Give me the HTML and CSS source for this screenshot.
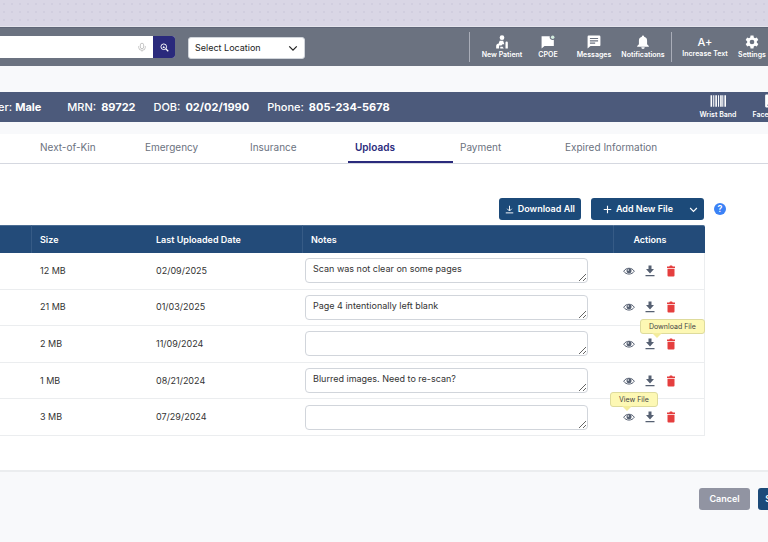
FILE: index.html
```html
<!DOCTYPE html>
<html lang="en">

<head>
    <meta charset="UTF-8">
    <meta name="viewport" content="width=device-width, initial-scale=1.0">
    <title>Patient Uploads</title>
    <link rel="stylesheet" href="styles.css">
</head>

<body>
    <!-- Shared icons -->
    <svg class="sprite" aria-hidden="true">
        <symbol id="eye" viewBox="0 0 24 24">
            <path d="M1.5 12.5C6 4.5 18 4.5 22.5 12.5C18 20 6 20 1.5 12.5Z" fill="none" stroke="currentColor" stroke-width="2" />
            <circle cx="12" cy="11.5" r="5" fill="currentColor" />
            <circle cx="10.500" cy="10" r="1.500" fill="#fff" />
        </symbol>
        <symbol id="download" viewBox="0 0 24 24">
            <path d="M9 1h6v7h5l-8 9-8-9h5zM3 20h18v2.500H3z" fill="currentColor" />
        </symbol>
        <symbol id="trash" viewBox="0 0 24 24">
            <path d="M4 3h4.500l1.500-2h4l1.500 2H20v3H4zM5 7.500h14V21a2 2 0 0 1-2 2H7a2 2 0 0 1-2-2z" fill="currentColor" />
        </symbol>
        <symbol id="chevron" viewBox="0 0 24 24">
            <path d="M3 8l9 9 9-9" fill="none" stroke="currentColor" stroke-width="3" />
        </symbol>
    </svg>

    <div class="backdrop"></div>

    <header class="topbar">
        <form class="search">
            <input type="text" aria-label="Search">
            <svg class="mic" viewBox="0 0 24 24"><path d="M12 3a4 4 0 0 0-4 4v5a4 4 0 0 0 8 0V7a4 4 0 0 0-4-4zM4 10v3a8 7 0 0 0 16 0v-3M12 20v3" fill="none" stroke="currentColor" stroke-width="2" /></svg>
            <button type="button" aria-label="Search"><svg viewBox="0 0 24 24"><circle cx="10" cy="10" r="7.500" fill="none" stroke="currentColor" stroke-width="2.500" /><path d="M15 15l7 7" stroke="currentColor" stroke-width="3.500" /><circle cx="10" cy="8.500" r="1.500" fill="currentColor" /><path d="M7 13c0-3 6-3 6 0z" fill="currentColor" /></svg></button>
        </form>
        <div class="location">
            <select aria-label="Location">
                <option>Select Location</option>
            </select>
            <svg viewBox="0 0 24 24"><use href="#chevron" /></svg>
        </div>
        <nav class="tools">
            <button type="button" class="tool new-patient">
                <svg viewBox="0 0 24 24"><circle cx="12" cy="4.500" r="4" fill="currentColor" /><path d="M2 23v-4c0-3 2-4 4-4l2-5h6l2 6h-3l-2 2H7v5zM9 23v-3h4l2 3zM18 13a2 2 0 0 1 4 0v10h-4z" fill="currentColor" /></svg>
                New Patient
            </button>
            <button type="button" class="tool cpoe">
                <svg viewBox="0 0 24 24"><path d="M1 2h14a5 5 0 0 0 7 6v11H6l-5 4z" fill="currentColor" /><circle cx="20" cy="4" r="3" fill="#d3ecdf" /></svg>
                CPOE
            </button>
            <button type="button" class="tool messages">
                <svg viewBox="0 0 24 24"><path d="M3 1h18a2 2 0 0 1 2 2v14a2 2 0 0 1-2 2H6l-5 4V3a2 2 0 0 1 2-2z" fill="currentColor" /><path d="M5 6h14M5 10h14M5 14h9" stroke="#6b7280" stroke-width="2" /></svg>
                Messages
            </button>
            <button type="button" class="tool notifications">
                <svg viewBox="0 0 24 24"><path d="M12 1a2 2 0 0 1 2 2c4 1 5 4 5 7v6l3 3v1H2v-1l3-3v-6c0-3 1-6 5-7a2 2 0 0 1 2-2zM9 21h6a3 3 0 0 1-6 0z" fill="currentColor" /></svg>
                Notifications
            </button>
        </nav>
        <nav class="tools">
            <button type="button" class="tool increase">
                <span class="letter">A+</span>
                Increase Text
            </button>
            <button type="button" class="tool settings">
                <svg viewBox="0 0 24 24"><path fill-rule="evenodd" d="M9.500 1h5l.6 3.300 2.100 1.200 3.100-1.200 2.500 4.300-2.500 2.200v2.400l2.500 2.200-2.500 4.300-3.100-1.200-2.100 1.200-.6 3.300h-5l-.6-3.300-2.100-1.200-3.100 1.200-2.500-4.300 2.500-2.200v-2.400L1.200 8.600l2.500-4.300 3.100 1.200 2.100-1.200zM12 8a4 4 0 1 0 0 8 4 4 0 0 0 0-8z" fill="currentColor" /></svg>
                Settings
            </button>
        </nav>
    </header>

    <section class="patient">
        <dl class="facts">
            <div class="gender"><dt>Gender:</dt><dd>Male</dd></div>
            <div><dt>MRN:</dt><dd>89722</dd></div>
            <div><dt>DOB:</dt><dd>02/02/1990</dd></div>
            <div><dt>Phone:</dt><dd>805-234-5678</dd></div>
        </dl>
        <div class="prints">
            <button type="button" class="tool">
                <svg viewBox="0 0 30 24"><path d="M1 1h3v22H1zM6 1h2v22H6zM10 1h3v22h-3zM15 1h2v22h-2zM19 1h3v22h-3zM23 1h2v22h-2zM27 1h3v22h-3z" fill="currentColor" /></svg>
                Wrist Band
            </button>
            <button type="button" class="tool">
                <svg viewBox="0 0 30 24"><path fill-rule="evenodd" d="M6 0h18a2 2 0 0 1 2 2v20a2 2 0 0 1-2 2H6a2 2 0 0 1-2-2V2a2 2 0 0 1 2-2zM15 6a4 4 0 1 0 0 8 4 4 0 0 0 0-8zM8 21h14c0-6-14-6-14 0z" fill="currentColor" /></svg>
                Face Sheet
            </button>
        </div>
    </section>

    <main class="panel">
        <nav class="tabs">
            <a href="#">Next-of-Kin</a>
            <a href="#">Emergency</a>
            <a href="#">Insurance</a>
            <a href="#" class="active" aria-current="page">Uploads</a>
            <a href="#">Payment</a>
            <a href="#">Expired Information</a>
        </nav>

        <div class="actions-bar">
            <button type="button" class="btn">
                <svg viewBox="0 0 24 24"><path d="M12 2v13M6 10l6 6 6-6M2 21h20" fill="none" stroke="currentColor" stroke-width="2.500" /></svg>
                Download All
            </button>
            <button type="button" class="btn add">
                <svg viewBox="0 0 24 24"><path d="M12 2v20M2 12h20" stroke="currentColor" stroke-width="3" /></svg>
                Add New File
                <svg class="more" viewBox="0 0 24 24"><use href="#chevron" /></svg>
            </button>
            <button type="button" class="help" aria-label="Help">?</button>
        </div>

        <table class="files">
            <colgroup>
                <col class="col-edge">
                <col class="col-size">
                <col class="col-date">
                <col>
                <col class="col-actions">
            </colgroup>
            <thead>
                <tr>
                    <th></th>
                    <th class="split">Size</th>
                    <th>Last Uploaded Date</th>
                    <th class="split">Notes</th>
                    <th class="split center">Actions</th>
                </tr>
            </thead>
            <tbody>
                <tr>
                    <td></td>
                    <td>12 MB</td>
                    <td>02/09/2025</td>
                    <td class="note"><textarea aria-label="Notes">Scan was not clear on some pages</textarea></td>
                    <td class="row-actions">
                        <div>
                            <button type="button" aria-label="View"><svg><use href="#eye" /></svg></button>
                            <button type="button" aria-label="Download"><svg><use href="#download" /></svg></button>
                            <button type="button" class="delete" aria-label="Delete"><svg><use href="#trash" /></svg></button>
                        </div>
                    </td>
                </tr>
                <tr>
                    <td></td>
                    <td>21 MB</td>
                    <td>01/03/2025</td>
                    <td class="note"><textarea aria-label="Notes">Page 4 intentionally left blank</textarea></td>
                    <td class="row-actions">
                        <div>
                            <button type="button" aria-label="View"><svg><use href="#eye" /></svg></button>
                            <button type="button" aria-label="Download"><svg><use href="#download" /></svg></button>
                            <button type="button" class="delete" aria-label="Delete"><svg><use href="#trash" /></svg></button>
                        </div>
                    </td>
                </tr>
                <tr>
                    <td></td>
                    <td>2 MB</td>
                    <td>11/09/2024</td>
                    <td class="note"><textarea aria-label="Notes"></textarea></td>
                    <td class="row-actions">
                        <div>
                            <button type="button" aria-label="View"><svg><use href="#eye" /></svg></button>
                            <button type="button" aria-label="Download"><svg><use href="#download" /></svg><span class="tip tip-download">Download File</span></button>
                            <button type="button" class="delete" aria-label="Delete"><svg><use href="#trash" /></svg></button>
                        </div>
                    </td>
                </tr>
                <tr>
                    <td></td>
                    <td>1 MB</td>
                    <td>08/21/2024</td>
                    <td class="note"><textarea aria-label="Notes">Blurred images. Need to re-scan?</textarea></td>
                    <td class="row-actions">
                        <div>
                            <button type="button" aria-label="View"><svg><use href="#eye" /></svg></button>
                            <button type="button" aria-label="Download"><svg><use href="#download" /></svg></button>
                            <button type="button" class="delete" aria-label="Delete"><svg><use href="#trash" /></svg></button>
                        </div>
                    </td>
                </tr>
                <tr>
                    <td></td>
                    <td>3 MB</td>
                    <td>07/29/2024</td>
                    <td class="note"><textarea aria-label="Notes"></textarea></td>
                    <td class="row-actions">
                        <div>
                            <button type="button" aria-label="View"><svg><use href="#eye" /></svg><span class="tip tip-view">View File</span></button>
                            <button type="button" aria-label="Download"><svg><use href="#download" /></svg></button>
                            <button type="button" class="delete" aria-label="Delete"><svg><use href="#trash" /></svg></button>
                        </div>
                    </td>
                </tr>
            </tbody>
        </table>
    </main>

    <footer class="form-actions">
        <button type="button" class="btn cancel">Cancel</button>
        <button type="button" class="btn save">Save</button>
    </footer>
</body>

</html>
```
FILE: styles.css
```css
* {
    box-sizing: border-box;
}

body {
    margin: 0;
    min-height: 100vh;
    overflow: hidden;
    background-color: #f8f9fb;
    color: #333;
    font-family: Inter, "Liberation Sans", sans-serif;
    font-size: 9px;
    line-height: 12px;
}

button,
select,
input,
textarea {
    font: inherit;
    color: inherit;
}

button {
    border: none;
    padding: 0;
    background: none;
    cursor: pointer;
}

svg {
    display: block;
    width: 12px;
    height: 12px;
}

.sprite {
    position: absolute;
    width: 0;
    height: 0;
}

.backdrop {
    height: 27px;
    background-color: #d9d6e5;
    background-image: radial-gradient(circle, #d1cedf 1px, transparent 1px);
    background-size: 8px 8px;
    border-bottom: 1px solid #e4e4ec;
}

/* Top bar */
.topbar {
    display: flex;
    align-items: center;
    height: 39px;
    background-color: #6b7280;
    border-top: 1px solid #5f6577;
    color: white;
}

.search {
    display: flex;
    align-items: center;
    flex: 0 1 175px;
    min-width: 0;
    height: 22px;
    background-color: white;
    border-radius: 0 3px 3px 0;
}

.search input {
    flex: 1;
    min-width: 0;
    height: 22px;
    border: none;
    background: none;
    color: #333;
}

.search .mic {
    width: 10px;
    height: 10px;
    margin-right: 6px;
    color: #bbb;
}

.search button {
    display: grid;
    place-items: center;
    width: 22px;
    height: 22px;
    background-color: #2a2a7c;
    border-radius: 0 3px 3px 0;
}

.search button svg {
    width: 9px;
    height: 9px;
}

.location {
    display: grid;
    align-items: center;
    width: 117px;
    margin: 2px auto 0 13px;
    color: #222;
}

.location select,
.location svg {
    grid-area: 1 / 1;
}

.location select {
    appearance: none;
    width: 100%;
    height: 22px;
    padding: 0 6px;
    border: 1px solid #d1d5db;
    border-radius: 3px;
    background-color: white;
}

.location svg {
    width: 10px;
    height: 10px;
    justify-self: end;
    margin-right: 7px;
    pointer-events: none;
}

.tools {
    display: flex;
    align-items: center;
    height: 30px;
    border-left: 1px solid #a9adb8;
}

.tool {
    display: flex;
    flex-direction: column;
    align-items: center;
    gap: 1px;
    color: white;
    font-size: 7px;
    font-weight: 600;
    line-height: 10px;
    white-space: nowrap;
}

.tool svg {
    width: 14px;
    height: 14px;
}

.new-patient {
    width: 64px;
}

.cpoe {
    width: 28px;
}

.messages {
    width: 64px;
}

.notifications {
    width: 34px;
    margin-right: 11px;
}

.increase {
    width: 66px;
    gap: 0;
}

.settings {
    width: 28px;
    margin-right: 2px;
}

.increase .letter {
    font-size: 11px;
    font-weight: 500;
    line-height: 13px;
}

/* Patient banner */
.patient {
    display: flex;
    justify-content: space-between;
    height: 30px;
    margin-top: 26px;
    background-color: #4c5a7b;
    color: white;
}

.facts {
    display: flex;
    align-items: center;
    gap: 18px;
    margin: 0 0 0 -30px;
    font-size: 11px;
    font-weight: 500;
}

.facts div {
    display: flex;
    gap: 5px;
}

.facts .gender {
    gap: 3px;
    margin-right: 8px;
}

.facts dd {
    margin: 0;
    font-weight: 700;
}

.prints {
    display: flex;
    align-items: center;
    gap: 16px;
    margin-right: -22px;
}

.prints .tool {
    gap: 2px;
}

.prints svg {
    width: 16px;
}

/* Uploads panel */
.panel {
    margin-top: 12px;
    padding-bottom: 34px;
    background-color: white;
    border-bottom: 2px solid #ebedef;
}

.tabs {
    display: flex;
    height: 30px;
    padding-left: 33px;
    border-bottom: 1px solid #d5d8e0;
    color: #6b7280;
    font-size: 10px;
}

.tabs a {
    flex: 0 0 105px;
    height: 29px;
    padding: 7px;
    border-bottom: 2px solid transparent;
    color: inherit;
    text-decoration: none;
    white-space: nowrap;
}

.tabs .active {
    border-color: #2a2a7c;
    color: #2a2a7c;
    font-weight: 600;
}

.actions-bar {
    display: flex;
    justify-content: flex-end;
    align-items: center;
    gap: 10px;
    margin: 34px 42px 5px 0;
}

.btn {
    display: flex;
    align-items: center;
    justify-content: center;
    gap: 4px;
    height: 22px;
    padding: 0 6px;
    border-radius: 3px;
    background-color: #1c4a79;
    color: white;
    font-weight: 600;
    white-space: nowrap;
}

.btn svg {
    width: 9px;
    height: 9px;
}

.add {
    padding-left: 12px;
}

.add .more {
    margin-left: 12px;
}

.help {
    width: 12px;
    height: 12px;
    border-radius: 50%;
    background-color: #3b82f6;
    color: white;
    font-weight: 600;
}

/* Files table */
.files {
    table-layout: fixed;
    width: calc(100% - 63px);
    height: 211px;
    border-spacing: 0;
}

.col-edge {
    width: 31px;
}

.col-size {
    width: 116px;
}

.col-date {
    width: 155px;
}

.col-actions {
    width: 92px;
}

.files th {
    height: 28px;
    padding: 0 9px;
    background-color: #234b79;
    border-top: 1px solid #4b6d93;
    color: white;
    font-weight: 600;
    text-align: left;
}

.files .split {
    padding-left: 8px;
    border-left: 1px solid #365b86;
}

.files th:last-child {
    border-radius: 0 2px 0 0;
}

.files .center {
    padding-right: 27px;
    text-align: center;
}

.files td {
    padding: 0 9px;
    border-bottom: 1px solid #ebedef;
}

.files td:last-child {
    border-right: 1px solid #ebedef;
}

.files .note {
    padding: 0 25px 0 3px;
}

.note textarea {
    display: block;
    width: 100%;
    height: 25px;
    padding: 4px 7px;
    border: 1px solid #d1d5db;
    border-radius: 4px;
    background-color: white;
    overflow: hidden;
    resize: both;
}

.files .row-actions {
    padding: 0 0 0 10px;
}

.row-actions div {
    display: flex;
    gap: 9px;
    color: #566072;
}

.row-actions button {
    position: relative;
}

.row-actions .delete {
    color: #e53e3e;
}

.tip {
    position: absolute;
    bottom: 16px;
    padding: 0 8px;
    border: 1px solid #dedb9c;
    border-radius: 3px;
    background-color: #fdf8b4;
    color: #444;
    font-size: 7px;
    line-height: 13px;
    white-space: nowrap;
}

.tip::after {
    content: "";
    position: absolute;
    top: 100%;
    left: 11px;
    border: 5px solid transparent;
    border-top-color: #f3ec9c;
    border-bottom: none;
}

.tip-download {
    left: -4px;
}

.tip-view {
    left: -13px;
}

/* Footer */
.form-actions {
    display: flex;
    justify-content: flex-end;
    gap: 8px;
    margin: 16px -26px 0 0;
}

.cancel {
    width: 51px;
    background-color: #9194a2;
}

.save {
    width: 36px;
}
```
